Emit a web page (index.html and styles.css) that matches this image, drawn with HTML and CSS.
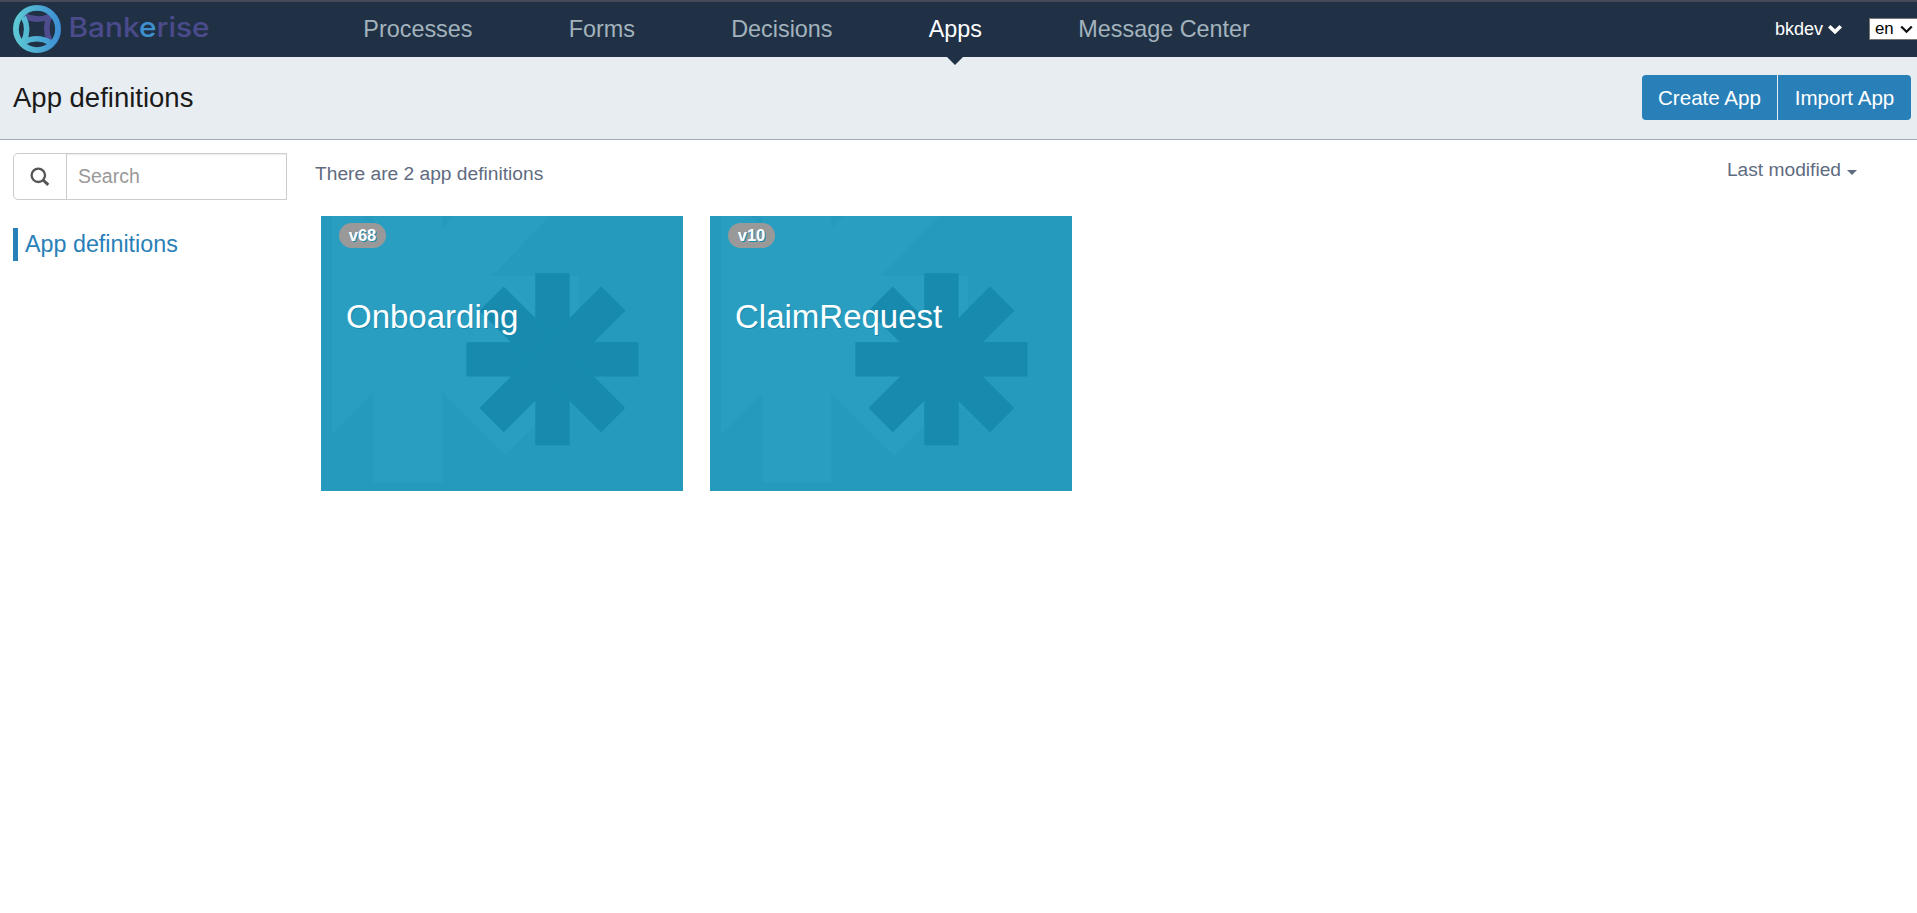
FILE: index.html
```html
<!DOCTYPE html>
<html lang="en">
<head>
<meta charset="utf-8">
<title>App definitions</title>
<link rel="stylesheet" href="styles.css">
</head>
<body>
<svg class="defs" width="0" height="0" aria-hidden="true">
  <symbol id="tile-art" viewBox="0 0 362 275">
    <path fill="#2a9ec1" d="M11 0H40.6L52.3 11.7V0H121.3V11.7L133 0H229.500L170.700 60H258V129H170.700L232.700 191.300L184 240L121.300 177.300V266.300H52.300V177.300L11 218.600Z"/>
    <g fill="#178aae">
      <rect x="214.300" y="57.300" width="34.300" height="172"/>
      <rect x="145.400" y="126.200" width="172" height="34.300"/>
      <rect x="145.400" y="126.200" width="172" height="34.300" transform="rotate(45 231.400 143.300)"/>
      <rect x="145.400" y="126.200" width="172" height="34.300" transform="rotate(-45 231.400 143.300)"/>
    </g>
  </symbol>
</svg>
<header class="navbar">
  <svg class="logo" width="206" height="50" viewBox="0 0 206 50">
    <defs>
      <linearGradient id="ring" x1="0" y1="0" x2="48" y2="0" gradientUnits="userSpaceOnUse">
        <stop offset="0" stop-color="#5ecbd3"/><stop offset="1" stop-color="#3d8ed3"/>
      </linearGradient>
    </defs>
    <g fill="none" stroke-width="5.600">
      <path stroke="#4f4c8e" d="M37 10Q30.500 23 37 37"/>
      <path stroke="#4f4c8e" d="M11 10.500Q24 17.500 38 11"/>
      <path stroke="url(#ring)" d="M10.500 12Q17 24 10.500 37"/>
      <path stroke="url(#ring)" d="M10 37.500Q24 30 37 37.500"/>
      <circle cx="24" cy="24" r="21.100" stroke="url(#ring)" stroke-width="5.800"/>
    </g>
    <text class="wordmark" x="55.500" y="32" textLength="141" lengthAdjust="spacingAndGlyphs">Bank<tspan class="wordmark-accent">e</tspan>rise</text>
  </svg>
  <nav class="nav">
    <a>Processes</a><a>Forms</a><a>Decisions</a><a class="active">Apps</a><a>Message Center</a>
  </nav>
  <div class="account">
    <span class="user">bkdev</span>
    <svg width="16" height="11" viewBox="0 0 16 11"><path fill="#fff" d="M1 3.500L3.500 1L8 5.300L12.500 1L15 3.500L8 10.300Z"/></svg>
  </div>
  <div class="language"><span>en</span>
    <svg width="13" height="9" viewBox="0 0 13 9"><path fill="none" stroke="#111" stroke-width="2.300" d="M1.200 1.500L6.500 6.700L11.800 1.500"/></svg>
  </div>
</header>
<section class="subheader">
  <h1>App definitions</h1>
  <div class="buttons"><button>Create App</button><button>Import App</button></div>
</section>
<main class="content">
  <aside class="sidebar">
    <div class="search">
      <span class="search-icon"><svg width="20" height="20" viewBox="0 0 20 20" fill="none" stroke="#555"><circle cx="8.300" cy="8.300" r="6.700" stroke-width="2.300"/><path stroke-width="3" d="M13 13L18.300 17.800"/></svg></span>
      <input type="text" placeholder="Search">
    </div>
    <a class="filter">App definitions</a>
  </aside>
  <section class="list">
    <div class="list-head">
      <span class="count">There are 2 app definitions</span>
      <span class="sort">Last modified <i class="caret"></i></span>
    </div>
    <div class="tiles">
      <article class="tile">
        <svg class="tile-art" width="362" height="275"><use href="#tile-art"/></svg>
        <div class="tile-body"><span class="badge">v68</span><h3>Onboarding</h3></div>
      </article>
      <article class="tile">
        <svg class="tile-art" width="362" height="275"><use href="#tile-art"/></svg>
        <div class="tile-body"><span class="badge">v10</span><h3>ClaimRequest</h3></div>
      </article>
    </div>
  </section>
</main>
</body>
</html>
```
FILE: styles.css
```css
* { box-sizing: border-box; }
body {
  margin: 0;
  background: #fff;
  font-family: "Liberation Sans", Arial, sans-serif;
  font-size: 19.5px;
  overflow: hidden;
}
.defs { position: absolute; }
.navbar {
  display: flex;
  align-items: flex-start;
  height: 57px;
  background: #203145;
  border-top: 2px solid #464958;
  padding-left: 13px;
}
.logo { margin-top: 3px; flex: none; }
.wordmark { font-family: Inter, sans-serif; font-weight: 500; font-size: 27.500px; fill: #4b4b8c; }
.wordmark-accent { fill: #3f90cf; }
.nav {
  display: flex;
  gap: 96.2px;
  margin-left: 144.300px;
  font-size: 23.400px;
  line-height: 27px;
  color: #a3b3bd;
  white-space: nowrap;
}
.nav a { position: relative; height: 55px; padding-top: 14px; }
.nav .active { color: #fff; }
.nav .active::after {
  content: "";
  position: absolute;
  left: 50%;
  top: 55px;
  margin-left: -8px;
  border: 8px solid transparent;
  border-top-color: #203145;
  border-bottom: 0;
}
.account {
  display: flex;
  align-items: center;
  gap: 4px;
  margin-left: auto;
  margin-top: 17px;
  height: 21px;
  color: #fff;
  font-size: 18px;
}
.language {
  display: flex;
  align-items: center;
  gap: 6px;
  flex: none;
  width: 48px;
  height: 22px;
  margin: 16px 0 0 26px;
  padding-left: 5px;
  border: 1px solid #767676;
  border-right: 0;
  background: #fff;
  color: #000;
  font-size: 16.800px;
}
.subheader {
  display: flex;
  justify-content: space-between;
  height: 83px;
  padding: 18px 6px 0 13px;
  background: #e8edf1;
  border-bottom: 1px solid #a1acb8;
}
h1 { margin: 7px 0 0; font-size: 27.500px; line-height: 32px; font-weight: 400; color: #1a1a1a; }
.buttons { display: flex; gap: 1px; height: 45px; }
.buttons button {
  width: 135px;
  border: 0;
  padding: 0;
  background: #2980b9;
  color: #fff;
  font: 20.600px "Liberation Sans", Arial, sans-serif;
  border-radius: 4px 0 0 4px;
}
.buttons button + button { width: 133px; border-radius: 0 4px 4px 0; }
.content { display: flex; align-items: flex-start; padding-left: 13px; }
.sidebar { width: 274px; padding-top: 13px; }
.search { display: flex; height: 47px; border: 1px solid #ccc; border-radius: 5px 0 0 5px; }
.search-icon { display: flex; align-items: center; width: 53px; padding-left: 16px; border-right: 1px solid #ccc; }
.search input {
  flex: 1;
  min-width: 0;
  border: 0;
  padding: 0 0 0 11px;
  font: 19.500px "Liberation Sans", Arial, sans-serif;
  box-shadow: inset 0 1px 1px rgba(0, 0, 0, .075);
}
.search input::placeholder { color: #999; opacity: 1; }
.filter {
  display: block;
  margin-top: 28px;
  height: 33px;
  border-left: 5px solid #2980b9;
  padding-left: 7px;
  font-size: 23.300px;
  line-height: 32px;
  color: #2980b9;
}
.list { flex: 1; padding: 0 60px 0 28px; }
.list-head { display: flex; justify-content: space-between; height: 76px; color: #5f6b7f; line-height: 22px; }
.count { padding-top: 23px; font-size: 19.200px; }
.sort { display: flex; align-items: center; gap: 6px; height: 22px; margin-top: 19px; font-size: 19.200px; }
.caret { margin-top: 4px; border: 5px solid transparent; border-top-color: #5f6b7f; border-bottom: 0; }
.tiles { display: flex; gap: 27px; padding-left: 6px; }
.tile { position: relative; width: 362px; height: 275px; background: #259abd; color: #fff; }
.tile-art { position: absolute; left: 0; top: 0; }
.tile-body {
  position: relative;
  display: flex;
  flex-direction: column;
  align-items: flex-start;
  padding: 7px 18px;
  text-shadow: 1px 1px 0 #178aae;
}
.badge {
  width: 47px;
  height: 25px;
  border-radius: 13px;
  background: #999;
  text-align: center;
  font-size: 16.500px;
  line-height: 25px;
  font-weight: 700;
}
h3 { margin: 50px 0 0 7px; font-size: 33px; line-height: 38px; font-weight: 400; text-shadow: 1px 1px 0 #178aae; }
```
